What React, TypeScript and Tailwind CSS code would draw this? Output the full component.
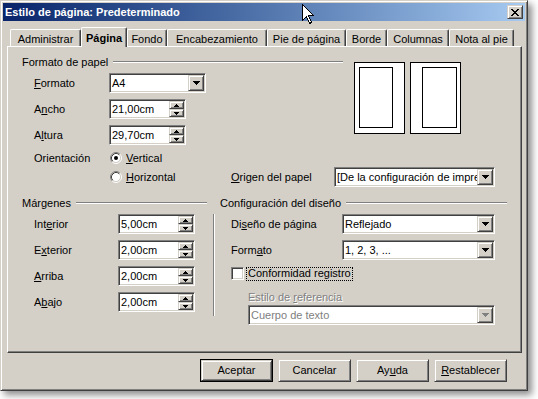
import React from "react";

const raised =
  "bg-[#d4d0c8] border border-t-[#d4d0c8] border-l-[#d4d0c8] border-r-[#404040] border-b-[#404040] shadow-[inset_1px_1px_#fff,inset_-1px_-1px_#808080]";
const sunken =
  "bg-white border border-t-[#808080] border-l-[#808080] border-r-white border-b-white shadow-[inset_1px_1px_#404040,inset_-1px_-1px_#d4d0c8]";

const Pix = ({ rows, color }: { rows: string[]; color: string }) => (
  <svg width={rows[0].length} height={rows.length} shapeRendering="crispEdges">
    {rows.flatMap((r, y) =>
      r
        .split("")
        .map((c, x) =>
          c === "x" ? <rect key={`${x}-${y}`} x={x} y={y} width={1} height={1} fill={color} /> : null
        )
    )}
  </svg>
);

const down7 = ["xxxxxxx", ".xxxxx.", "..xxx..", "...x..."];
const up5 = ["..x..", ".xxx.", "xxxxx"];
const down5 = ["xxxxx", ".xxx.", "..x.."];
const closeX = ["xx....xx", ".xx..xx.", "..xxxx..", "...xx...", "..xxxx..", ".xx..xx.", "xx....xx"];

const Acc = ({ text, at }: { text: string; at: number }) => (
  <span>
    {text.slice(0, at)}
    <u className="underline-offset-[1px]">{text[at]}</u>
    {text.slice(at + 1)}
  </span>
);

const Header = ({ text }: { text: string }) => (
  <div className="h-[12px] flex items-center">
    <span>{text}</span>
    <div className="flex-1 ml-[5px] h-[2px] border-t border-t-[#808080] border-b border-b-white" />
  </div>
);

const Combo = ({ w, value, disabled }: { w: string; value: string; disabled?: boolean }) => (
  <div className={`${w} h-[20px] ${sunken} p-[1px] flex`}>
    <div
      className={`flex-1 overflow-hidden whitespace-nowrap flex items-center pl-[1px] ${
        disabled ? "text-[#808080]" : ""
      }`}
    >
      {value}
    </div>
    <div className={`w-[16px] h-full ${raised} flex items-center justify-center`}>
      <Pix rows={down7} color={disabled ? "#808080" : "#000"} />
    </div>
  </div>
);

const SpinField = ({ value }: { value: string }) => (
  <div className={`w-[77px] h-[20px] ${sunken} p-[1px] flex`}>
    <div className="flex-1 flex items-center pl-[1px]">{value}</div>
    <div className="w-[15px] flex flex-col">
      <div className={`h-[8px] ${raised} flex items-center justify-center`}>
        <Pix rows={up5} color="#000" />
      </div>
      <div className={`h-[8px] ${raised} flex items-center justify-center`}>
        <Pix rows={down5} color="#000" />
      </div>
    </div>
  </div>
);

const Radio = ({ on }: { on?: boolean }) => (
  <svg width="12" height="12" viewBox="0 0 12 12">
    <circle cx="6" cy="6" r="4.5" fill="#fff" />
    <path d="M2.11 9.89A5.5 5.5 0 0 1 9.89 2.11" stroke="#808080" fill="none" />
    <path d="M9.89 2.11A5.5 5.5 0 0 1 2.11 9.89" stroke="#fff" fill="none" />
    <path d="M2.82 9.18A4.5 4.5 0 0 1 9.18 2.82" stroke="#404040" fill="none" />
    <path d="M9.18 2.82A4.5 4.5 0 0 1 2.82 9.18" stroke="#d4d0c8" fill="none" />
    {on && <circle cx="6" cy="6" r="2" fill="#000" />}
  </svg>
);

const Row = ({
  label,
  lw,
  mt,
  children,
}: {
  label: React.ReactNode;
  lw: string;
  mt: string;
  children: React.ReactNode;
}) => (
  <div className={`flex items-center h-[20px] ${mt}`}>
    <div className={lw}>{label}</div>
    {children}
  </div>
);

const Page = ({ mirror }: { mirror?: boolean }) => (
  <div
    className={`w-[51px] h-[72px] border border-black bg-white pt-[4px] pb-[5px] ${
      mirror ? "pl-[11px] pr-[3px]" : "pl-[4px] pr-[11px]"
    }`}
  >
    <div className="h-full border border-black" />
  </div>
);

const tabs = [
  { label: "Administrar", w: "w-[71px]" },
  { label: "Página", w: "w-[46px]", active: true },
  { label: "Fondo", w: "w-[40px]" },
  { label: "Encabezamiento", w: "w-[100px]" },
  { label: "Pie de página", w: "w-[79px]" },
  { label: "Borde", w: "w-[41px]" },
  { label: "Columnas", w: "w-[62px]" },
  { label: "Nota al pie", w: "w-[65px]" },
];

const Button = ({ children, def }: { children: React.ReactNode; def?: boolean }) => (
  <div className={`w-[73px] h-[23px] ${def ? "border border-black" : ""}`}>
    <div className={`h-full ${raised} flex items-center justify-center`}>{children}</div>
  </div>
);

export default function App() {
  return (
    <div className="relative w-[538px] h-[399px] bg-white overflow-hidden font-['Liberation_Sans',Arial,sans-serif] text-[11px] text-black leading-none">
      <div className="w-[528px] h-[391px] bg-[#d4d0c8] border border-t-[#d4d0c8] border-l-[#d4d0c8] border-r-[#404040] border-b-[#404040] shadow-[inset_1px_1px_#fff,inset_-1px_-1px_#808080,4px_4px_7px_rgba(0,0,0,0.45)] p-[2px] flex flex-col">
        <div className="h-[18px] bg-linear-to-r from-[#0a246a] to-[#a6caf0] flex items-center pl-[2px] pr-[2px]">
          <span className="flex-1 text-white font-bold">Estilo de página: Predeterminado</span>
          <div className={`w-[16px] h-[14px] ${raised} flex items-center justify-center`}>
            <Pix rows={closeX} color="#000" />
          </div>
        </div>

        <div className="relative z-10 mt-[6px] ml-[7px] h-[20px] -mb-[1px] flex items-start">
          {tabs.map((t) => (
            <div
              key={t.label}
              className={`${t.w} ${
                t.active ? "h-[20px] font-bold" : "mt-[2px] h-[17px]"
              } bg-[#d4d0c8] border-t border-l border-t-white border-l-white border-r border-r-[#404040] shadow-[inset_-1px_0_#808080] rounded-t-[2px] flex items-center justify-center pt-[2px] whitespace-nowrap`}
            >
              {t.label}
            </div>
          ))}
        </div>

        <div className="ml-[4px] mr-[3px] h-[307px] border border-t-white border-l-white border-r-[#404040] border-b-[#404040] shadow-[inset_-1px_-1px_#808080] px-[14px] pt-[9px]">
          <div className="flex">
            <div className="w-[321px]">
              <Header text="Formato de papel" />
              <div className="pl-[12px]">
                <Row label={<Acc text="Formato" at={0} />} lw="w-[75px]" mt="mt-[5px]">
                  <Combo w="w-[97px]" value="A4" />
                </Row>
                <Row label={<Acc text="Ancho" at={1} />} lw="w-[75px]" mt="mt-[6px]">
                  <SpinField value="21,00cm" />
                </Row>
                <Row label={<Acc text="Altura" at={1} />} lw="w-[75px]" mt="mt-[6px]">
                  <SpinField value="29,70cm" />
                </Row>
                <div className="flex items-center h-[18px] mt-[4px]">
                  <div className="w-[75px]">Orientación</div>
                  <div className="ml-[1px] flex">
                    <Radio on />
                  </div>
                  <span className="ml-[4px]">
                    <Acc text="Vertical" at={0} />
                  </span>
                </div>
              </div>
            </div>
            <div className="ml-[11px] mt-[6px] flex gap-[5px]">
              <Page />
              <Page mirror />
            </div>
          </div>

          <div className="pl-[12px] h-[20px] flex items-center">
            <div className="w-[75px]" />
            <div className="w-[122px] flex items-center">
              <div className="ml-[1px] flex">
                <Radio />
              </div>
              <span className="ml-[4px]">
                <Acc text="Horizontal" at={0} />
              </span>
            </div>
            <div className="w-[103px]">
              <Acc text="Origen del papel" at={0} />
            </div>
            <Combo w="w-[161px]" value="[De la configuración de impresora]" />
          </div>

          <div className="mt-[10px] flex">
            <div className="w-[185px]">
              <Header text="Márgenes" />
              <div className="pl-[12px]">
                <Row label={<Acc text="Interior" at={3} />} lw="w-[84px]" mt="mt-[5px]">
                  <SpinField value="5,00cm" />
                </Row>
                <Row label={<Acc text="Exterior" at={1} />} lw="w-[84px]" mt="mt-[6px]">
                  <SpinField value="2,00cm" />
                </Row>
                <Row label={<Acc text="Arriba" at={0} />} lw="w-[84px]" mt="mt-[6px]">
                  <SpinField value="2,00cm" />
                </Row>
                <Row label={<Acc text="Abajo" at={1} />} lw="w-[84px]" mt="mt-[6px]">
                  <SpinField value="2,00cm" />
                </Row>
              </div>
            </div>
            <div className="w-[13px] pt-[17px] pl-[6px]">
              <div className="w-[2px] h-[102px] border-l border-l-[#808080] border-r border-r-white" />
            </div>
            <div className="w-[287px]">
              <Header text="Configuración del diseño" />
              <div className="pl-[11px]">
                <Row label={<Acc text="Diseño de página" at={2} />} lw="w-[111px]" mt="mt-[5px]">
                  <Combo w="w-[153px]" value="Reflejado" />
                </Row>
                <Row label={<Acc text="Formato" at={4} />} lw="w-[111px]" mt="mt-[6px]">
                  <Combo w="w-[153px]" value="1, 2, 3, ..." />
                </Row>
                <div className="mt-[7px] h-[13px] flex items-center">
                  <div className={`w-[13px] h-[13px] ${sunken}`} />
                  <div className="ml-[2px] h-[14px] border border-dotted border-black px-[1px] flex items-center">
                    Conformidad registro
                  </div>
                </div>
                <div className="pl-[17px]">
                  <div className="mt-[11px] h-[12px] flex items-center text-[#808080] [text-shadow:1px_1px_0_#fff]">
                    <Acc text="Estilo de referencia" at={10} />
                  </div>
                  <div className="mt-[2px]">
                    <Combo w="w-[247px]" value="Cuerpo de texto" disabled />
                  </div>
                </div>
              </div>
            </div>
          </div>
        </div>

        <div className="mt-[6px] pr-[18px] flex justify-end gap-[5px]">
          <Button def>Aceptar</Button>
          <Button>Cancelar</Button>
          <Button>
            <Acc text="Ayuda" at={2} />
          </Button>
          <Button>
            <Acc text="Restablecer" at={0} />
          </Button>
        </div>
      </div>

      <svg className="absolute left-[302px] top-[4px]" width="13" height="21" viewBox="0 0 13 21">
        <path
          d="M0.5 0.5L0.5 16.5L4.5 12.5L7.5 19.5L9.5 18.5L6.5 11.5L11.5 11.5Z"
          fill="#fff"
          stroke="#000"
          shapeRendering="crispEdges"
        />
      </svg>
    </div>
  );
}
